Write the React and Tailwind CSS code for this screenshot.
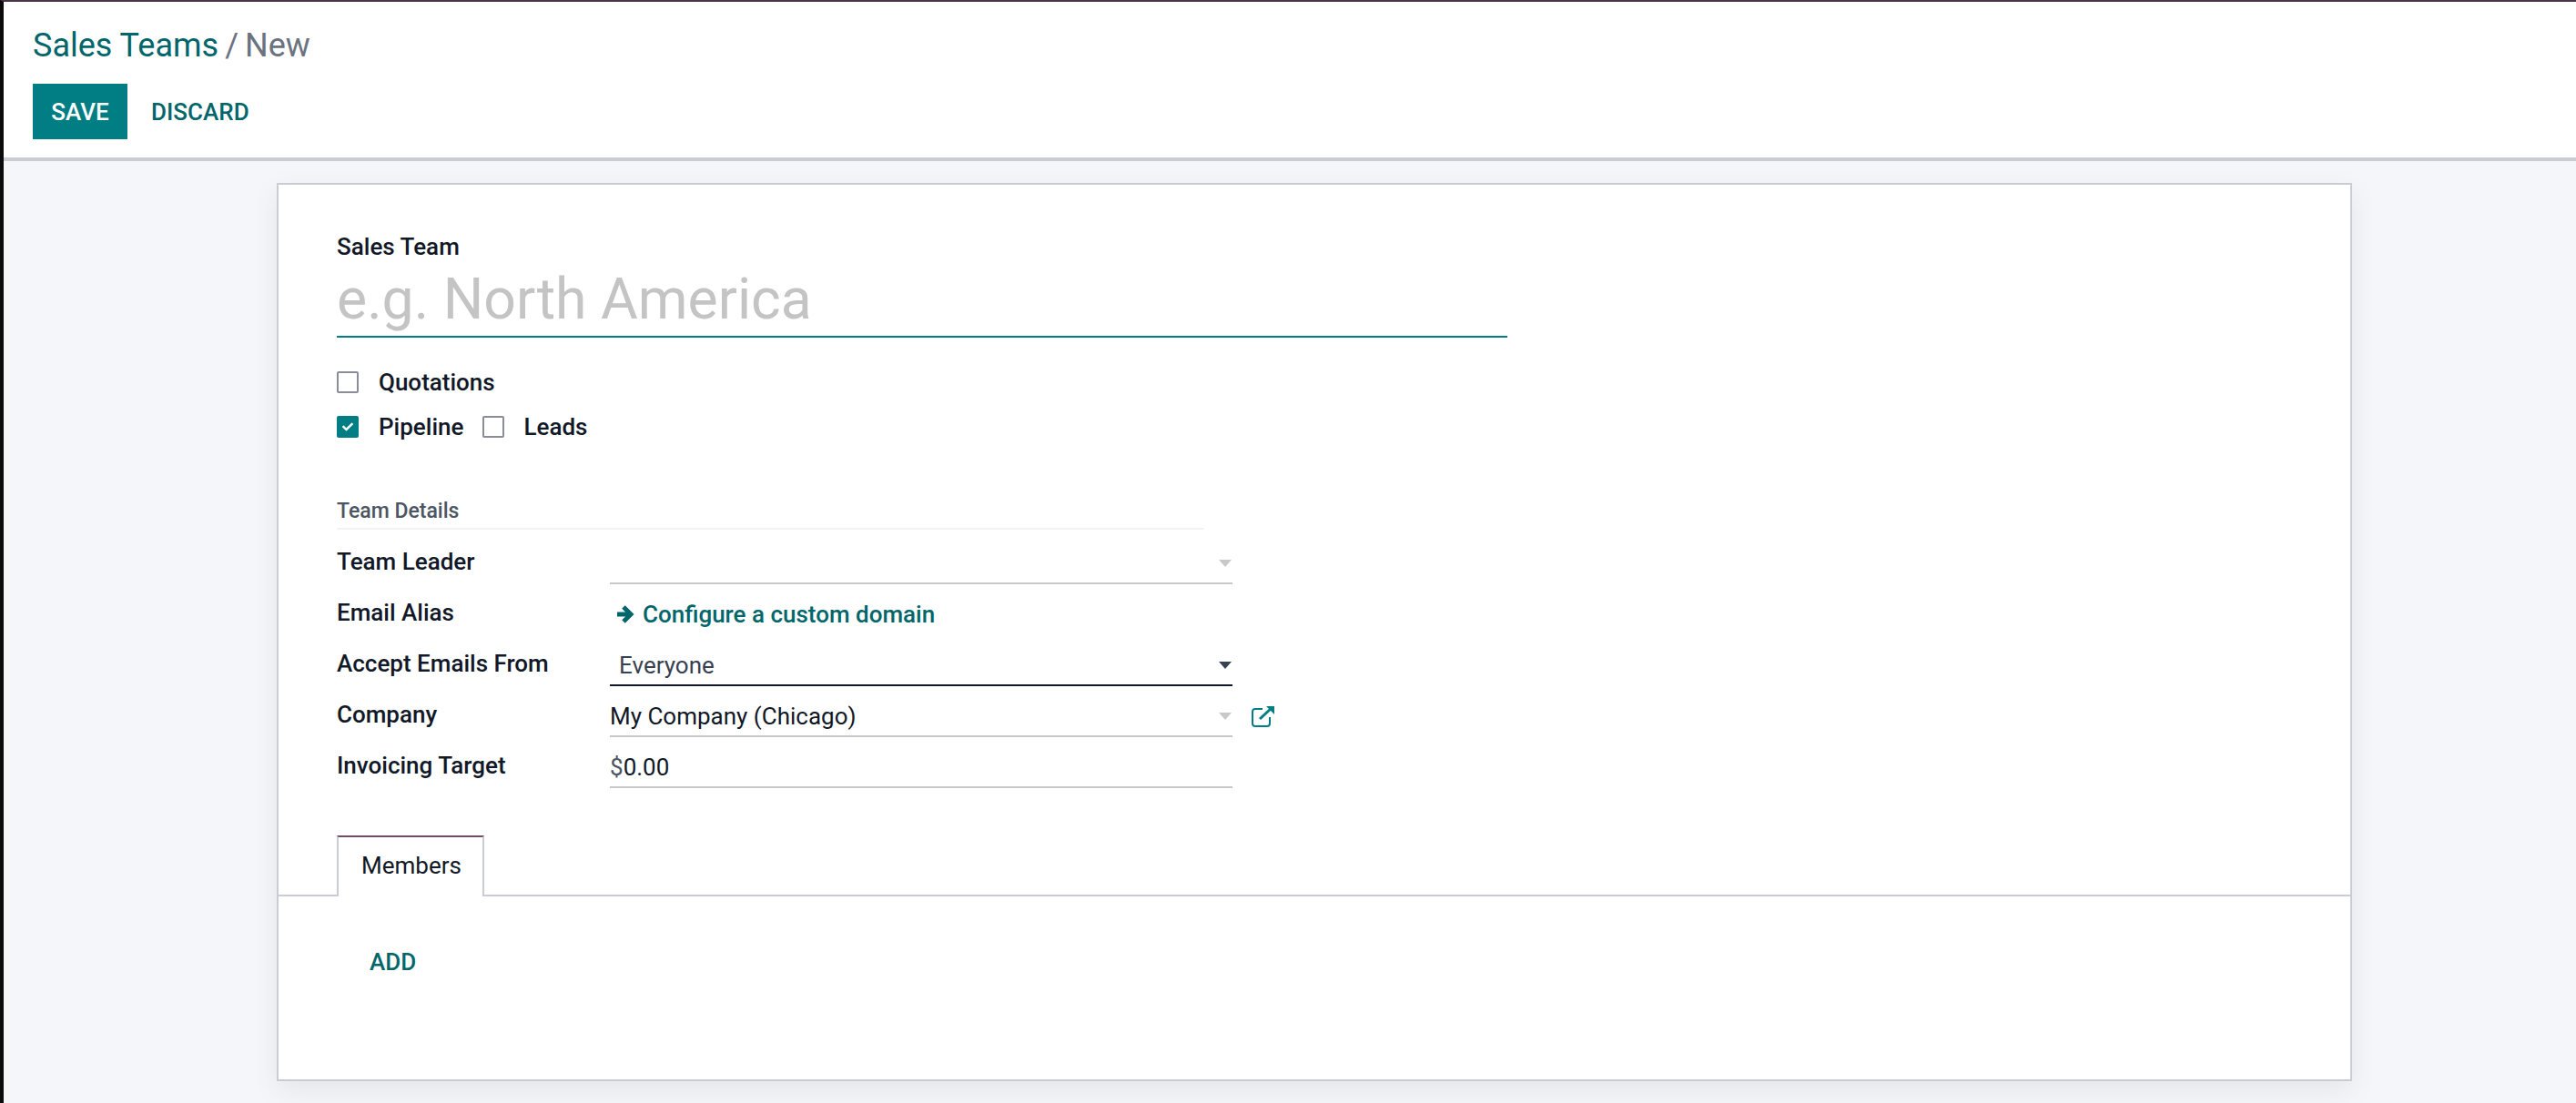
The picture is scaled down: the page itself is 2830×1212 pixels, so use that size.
import { FaCheck } from "react-icons/fa";

function Caret({ dark }) {
  return (
    <span
      className={`ml-auto mr-[1px] h-0 w-0 border-x-[7px] border-t-[8px] border-x-transparent ${
        dark ? "border-t-[#374151]" : "border-t-[#c8c8c8]"
      }`}
    />
  );
}

function Checkbox({ checked }) {
  return (
    <span
      className={`flex h-[24px] w-[24px] items-center justify-center rounded-[2px] border-2 ${
        checked ? "border-[#017e84] bg-[#017e84]" : "border-[#8a8d99] bg-white"
      }`}
    >
      {checked && <FaCheck className="text-[12px] text-white" />}
    </span>
  );
}

function Row({ label, children, line = "border-[#c8c8c8]" }) {
  return (
    <div className="flex h-[56px]">
      <div className="w-[300px] pt-[14px] text-[26px] leading-[34px] font-medium text-[#111827]">{label}</div>
      <div className={`flex h-[56px] w-[684px] items-center border-b-2 pt-[12px] text-[26px] ${line}`}>{children}</div>
    </div>
  );
}

export default function App() {
  return (
    <div className="h-[1212px] overflow-hidden border-t-2 border-l-4 border-t-[#4b3348] border-l-[#0a0a0a] bg-[#f5f6fa] font-['Roboto',sans-serif]">
      {/* HEADER */}
      <div className="h-[175px] border-b-4 border-[#c9ccd2] bg-white pt-[26px] pl-[32px]">
        <div className="text-[36px] leading-[44px] text-[#01666b]">
          Sales Teams
          <span className="ml-[7px] text-[#6b7280]">/</span>
          <span className="ml-[7px] text-[#6b7280]">New</span>
        </div>
        <div className="mt-[20px] flex items-center">
          <button className="h-[61px] w-[104px] bg-[#017e84] pt-[2px] text-[26px] font-medium text-white">SAVE</button>
          <button className="ml-[26px] pt-[2px] text-[26px] font-medium text-[#01666b]">DISCARD</button>
        </div>
      </div>

      {/* CARD */}
      <div className="mt-[24px] ml-[300px] h-[987px] w-[2280px] border-2 border-[#c9ccd2] bg-white shadow-[0_10px_30px_rgba(0,0,0,0.07)]">
        <div className="pt-[50px] pl-[64px]">
          <div className="text-[26px] leading-[36px] font-medium text-[#111827]">Sales Team</div>
          <input
            placeholder="e.g. North America"
            className="block h-[82px] w-[1286px] border-b-2 border-[#017e84] text-[62.5px] outline-none placeholder:text-[#c4c4c4]"
          />

          <div className="mt-[37px] flex h-[24px] items-center">
            <Checkbox />
            <span className="ml-[22px] text-[26px] font-medium text-[#111827]">Quotations</span>
          </div>
          <div className="mt-[25px] flex h-[24px] items-center">
            <Checkbox checked />
            <span className="ml-[22px] text-[26px] font-medium text-[#111827]">Pipeline</span>
            <span className="ml-[21px]">
              <Checkbox />
            </span>
            <span className="ml-[21px] text-[26px] font-medium text-[#111827]">Leads</span>
          </div>

          <div className="mt-[64px] h-[37px] w-[953px] border-b-2 border-[#f3f3f3] text-[23px] leading-[34px] font-medium text-[#4b5563]">
            Team Details
          </div>

          <div className="mt-[4px]">
            <Row label="Team Leader">
              <Caret />
            </Row>
            <Row label="Email Alias" line="border-transparent">
              <svg viewBox="0 0 20 22" className="ml-[7px] h-[22px] w-[20px] fill-none stroke-[#01666b] stroke-[5]">
                <path d="M1 11h15" />
                <path d="M8 3l8 8-8 8" />
              </svg>
              <span className="ml-[9px] font-medium text-[#01666b]">Configure a custom domain</span>
            </Row>
            <Row label="Accept Emails From" line="border-[#111827]">
              <span className="ml-[10px] text-[#374151]">Everyone</span>
              <Caret dark />
            </Row>
            <div className="relative">
              <Row label="Company">
                <span className="text-[#111827]">My Company (Chicago)</span>
                <Caret />
              </Row>
              <svg
                viewBox="0 0 28 24"
                className="absolute top-[21px] left-[1004px] h-[24px] w-[28px] fill-none stroke-[#017e84] stroke-2"
              >
                <path d="M13 4H5a3 3 0 0 0-3 3v13a3 3 0 0 0 3 3h13a3 3 0 0 0 3-3v-7" />
                <path d="M10 15 24 2" strokeWidth="3" />
                <path d="M17 1h9v9z" fill="#017e84" stroke="none" />
              </svg>
            </div>
            <Row label="Invoicing Target">
              <span className="text-[#111827]">
                <span className="text-[#4b5563]">$</span>0.00
              </span>
            </Row>
          </div>
        </div>

        {/* TABS */}
        <div className="mt-[52px] flex h-[67px] border-b-2 border-[#c9ccd2] pl-[64px]">
          <div className="mb-[-2px] h-[67px] w-[162px] border-x-2 border-t-2 border-x-[#c9ccd2] border-t-[#714b67] bg-white pt-[14px] pl-[25px] text-[26px] leading-[34px] text-[#111827]">
            Members
          </div>
        </div>
        <div className="pt-[55px] pl-[100px] text-[26px] leading-[34px] font-medium text-[#01666b]">ADD</div>
      </div>
    </div>
  );
}
